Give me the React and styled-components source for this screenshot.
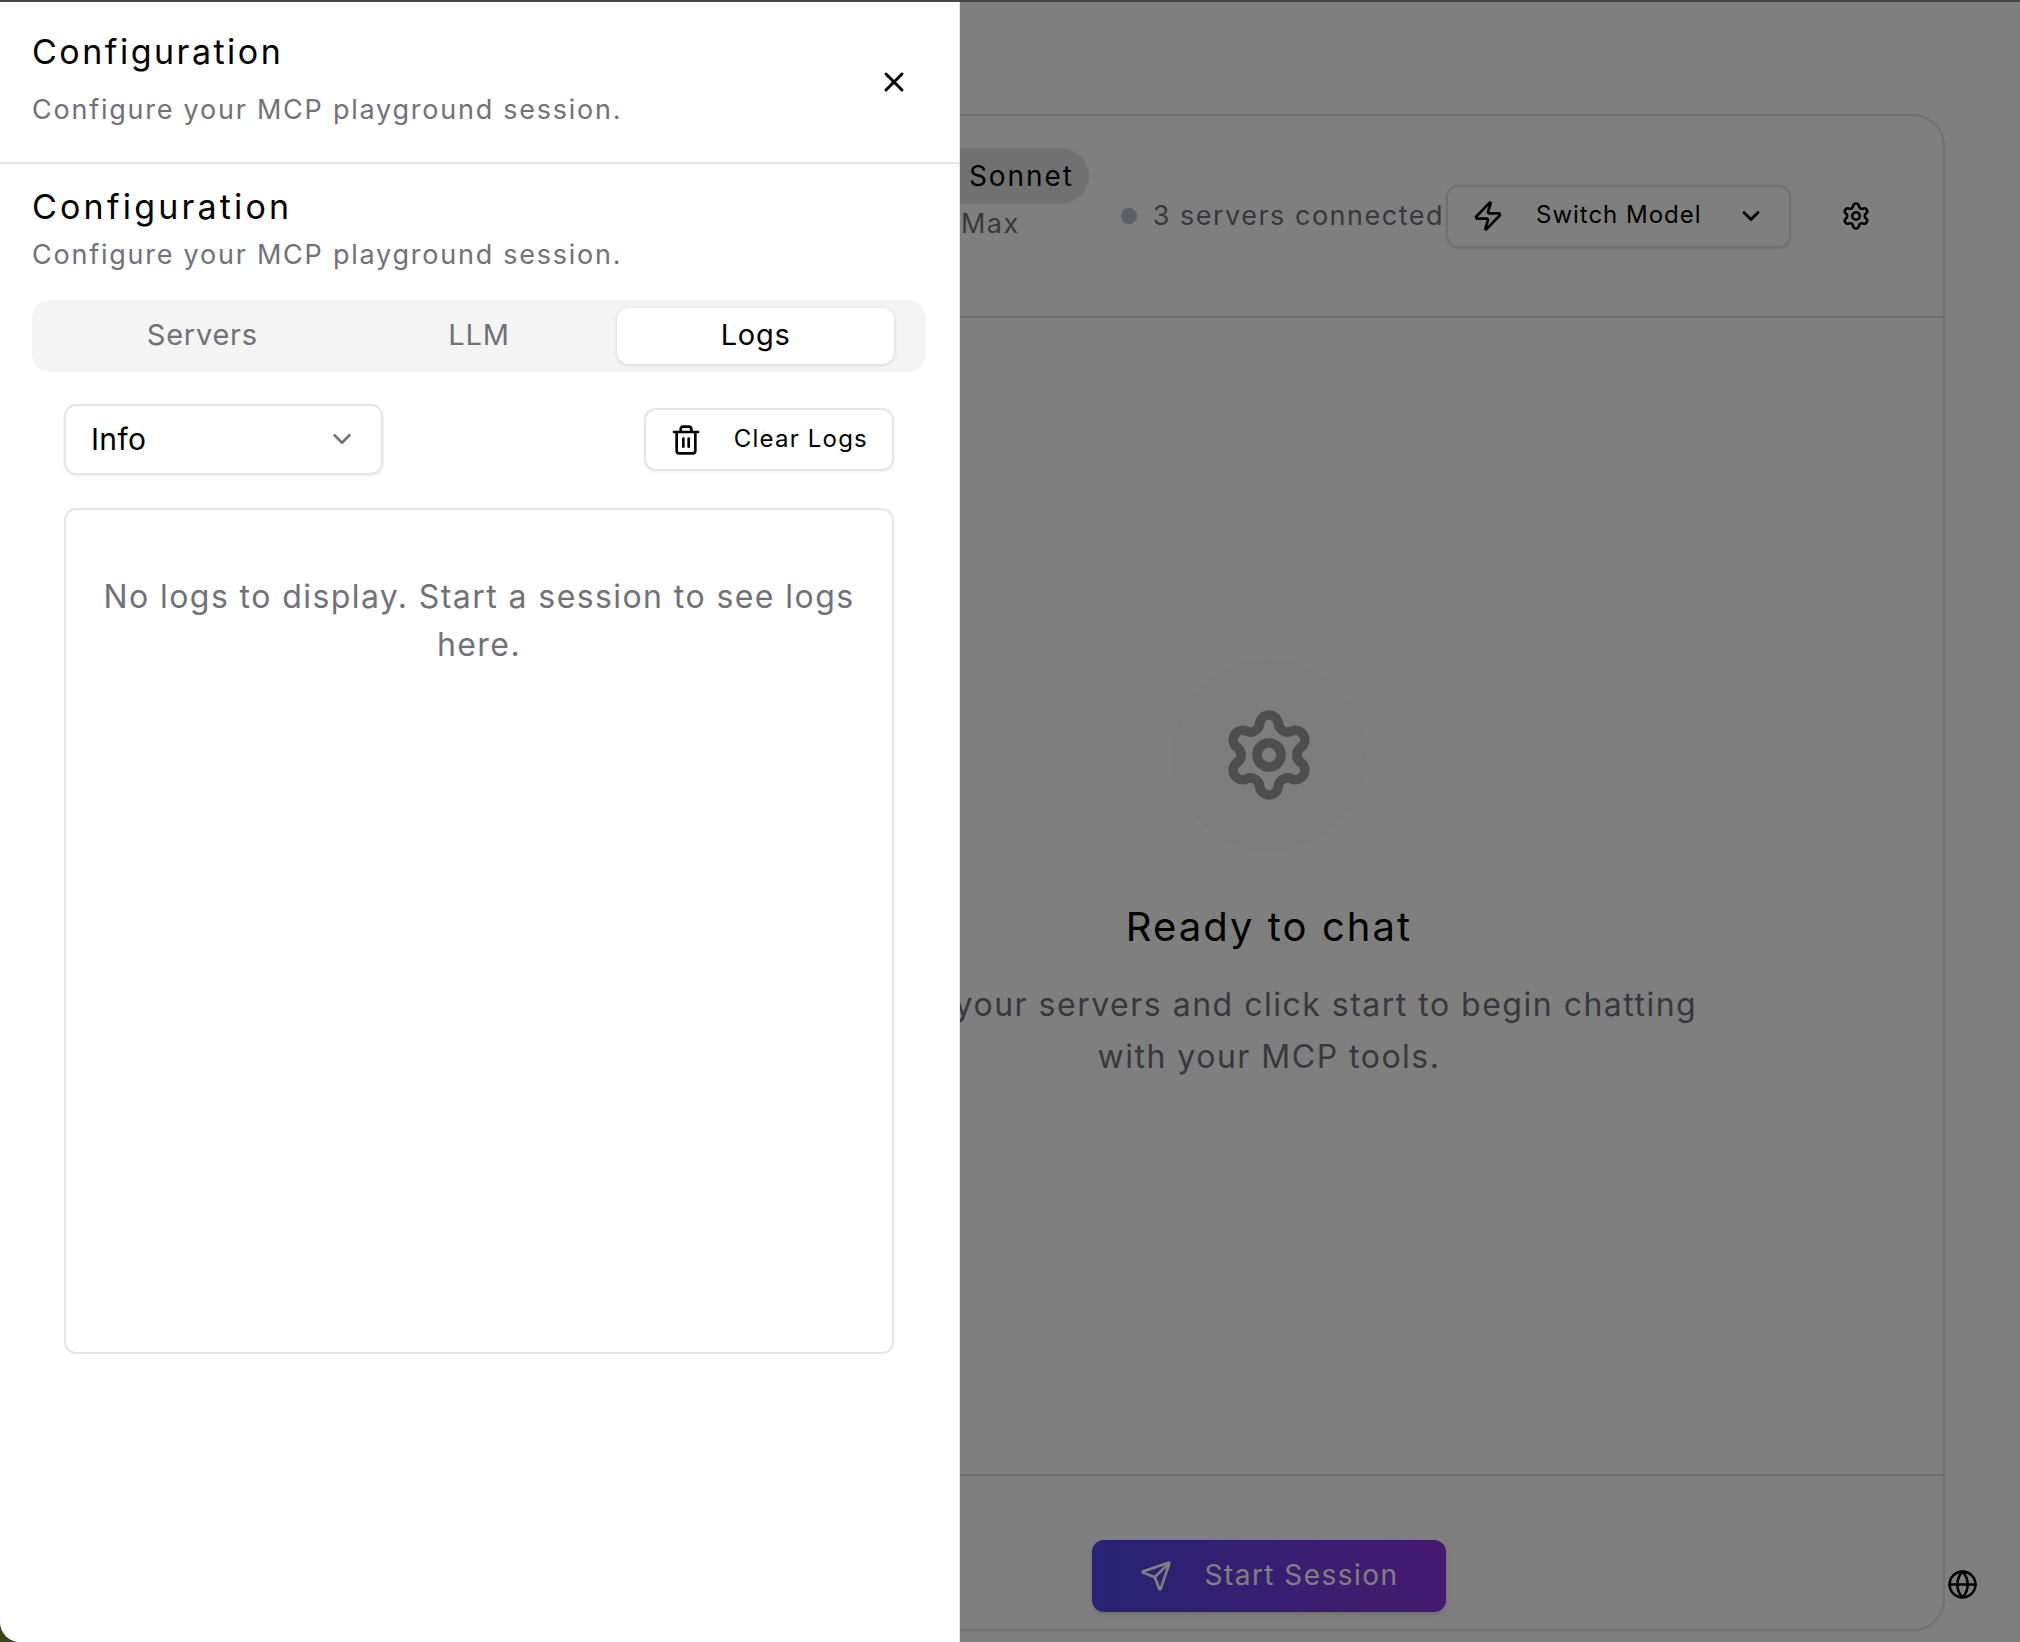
import React from 'react';
import styled, { createGlobalStyle } from 'styled-components';
import { ChevronDown, Globe, Send, Settings, Trash2, X, Zap } from 'lucide-react';

const GlobalStyle = createGlobalStyle`
  html, body, #root {
    margin: 0;
    height: 100%;
  }
  body {
    overflow: hidden;
    font-family: "Inter", "Open Sans", sans-serif;
    background: #fff;
    color: #000;
  }
  * { box-sizing: border-box; }
`;

const Screen = styled.div`
  position: relative;
  height: 1642px;
  width: 2020px;
  overflow: hidden;
  background: #fff;
`;

const Page = styled.main`
  height: 100%;
  padding: 114px 75px 11px 593px;
`;

const ChatCard = styled.section`
  height: 100%;
  display: flex;
  flex-direction: column;
  border: 2px solid #e4e4e4;
  border-radius: 32px;
`;

const CardHeader = styled.header`
  height: 202px;
  flex: none;
  display: flex;
  justify-content: flex-end;
  align-items: center;
  padding-right: 55px;
  border-bottom: 2px solid #e0e0e0;
`;

const ModelInfo = styled.div`
  align-self: flex-start;
  margin: 32px 32px 0 0;
  display: flex;
  flex-direction: column;
`;

const ModelPill = styled.div`
  height: 56px;
  padding: 0 15px 0 200px;
  display: flex;
  align-items: center;
  border-radius: 28px;
  background: #e2e2e2;
  font-size: 28px;
  letter-spacing: 1.9px;
`;

const ModelPlan = styled.div`
  margin-top: 2px;
  padding-left: 192px;
  font-size: 27px;
  line-height: 36px;
  letter-spacing: 1.5px;
  color: #71717a;
`;

const Status = styled.div`
  display: flex;
  align-items: center;
  gap: 16px;
  margin: -1px 2px 0 0;
  font-size: 27px;
  letter-spacing: 1.5px;
  color: #71717a;
`;

const StatusDot = styled.span`
  width: 16px;
  height: 16px;
  border-radius: 50%;
  background: #b4bccb;
`;

const SwitchButton = styled.button`
  width: 345px;
  height: 63px;
  display: flex;
  align-items: center;
  padding: 0 24px 0 24px;
  background: transparent;
  border: 2px solid #e2e2e2;
  border-radius: 12px;
  box-shadow: 0 1px 3px rgba(0, 0, 0, 0.08);
  font: inherit;
  font-size: 24px;
  letter-spacing: 0.98px;
  color: #000;

  span { margin: -4px auto 0 32px; }
`;

const IconButton = styled.button`
  width: 64px;
  height: 64px;
  margin-left: 33px;
  display: flex;
  align-items: center;
  justify-content: center;
  padding: 0;
  background: none;
  border: 0;
  color: #000;
`;

const CardBody = styled.div`
  flex: 1;
  display: flex;
  flex-direction: column;
  align-items: center;
  justify-content: center;
  padding-bottom: 50px;
`;

const IconCircle = styled.div`
  width: 192px;
  height: 192px;
  display: flex;
  align-items: center;
  justify-content: center;
  border-radius: 50%;
  background: #fbfbfb;
  color: #9c9c9c;
`;

const ReadyTitle = styled.h2`
  margin: 50px 0 0;
  font-size: 40px;
  line-height: 52px;
  font-weight: 400;
  letter-spacing: 2.05px;
`;

const ReadyText = styled.p`
  margin: 26px 0 0;
  width: 1100px;
  text-align: center;
  font-size: 32px;
  line-height: 52px;
  letter-spacing: 1.5px;
  color: #71717a;
`;

const CardFooter = styled.footer`
  flex: none;
  display: flex;
  justify-content: center;
  height: 155px;
  padding-top: 64px;
  border-top: 2px solid #e0e0e0;
`;

const StartButton = styled.button`
  width: 354px;
  height: 72px;
  display: flex;
  align-items: center;
  justify-content: center;
  gap: 33px;
  border: 0;
  border-radius: 12px;
  background: linear-gradient(90deg, #4f46e5, #8b35e0);
  box-shadow: 0 2px 4px rgba(0, 0, 0, 0.15);
  font: inherit;
  font-size: 28px;
  letter-spacing: 1.45px;
  color: #fff;

  span { margin-top: -2px; }
`;

const GlobeButton = styled.div`
  position: absolute;
  left: 1947px;
  top: 1569px;
  color: #000;
  display: flex;
`;

const Backdrop = styled.div`
  position: absolute;
  inset: 0;
  background: rgba(0, 0, 0, 0.5);
`;

const TopEdge = styled.div`
  position: absolute;
  inset: 0 0 auto 0;
  height: 2px;
  background: #474747;
`;

const WindowCorner = styled.div`
  position: absolute;
  left: 0;
  bottom: 0;
  width: 18px;
  height: 18px;
  background: #3c4219;
`;

const Sheet = styled.aside`
  position: absolute;
  left: 0;
  top: 2px;
  bottom: 0;
  width: 959px;
  background: #fff;
  border-bottom-left-radius: 20px;
  box-shadow: 1px 0 0 #e6e6e6;
`;

const SheetHeader = styled.header`
  height: 162px;
  display: flex;
  align-items: center;
  justify-content: space-between;
  padding: 0 49px 0 32px;
  border-bottom: 2px solid #e6e6e6;
`;

const HeaderText = styled.div`
  margin-top: -3px;
`;

const SheetTitle = styled.h2`
  margin: 0;
  font-size: 34px;
  line-height: 48px;
  font-weight: 400;
  letter-spacing: ${(p) => (p.$large ? '3.2px' : '2.5px')};
`;

const SheetSubtitle = styled.p`
  margin: ${(p) => (p.$tight ? '0' : '10px')} 0 0;
  font-size: 27px;
  line-height: 48px;
  letter-spacing: 1.76px;
  color: #71717a;
`;

const CloseButton = styled.button`
  display: flex;
  padding: 0;
  border: 0;
  background: none;
  color: #000;
`;

const SheetBody = styled.div`
  padding: 19px 33px 0 32px;
`;

const Tabs = styled.div`
  display: grid;
  grid-template-columns: repeat(3, 1fr);
  height: 72px;
  margin-top: 21px;
  padding: 8px 32px;
  border-radius: 18px;
  background: #f4f4f5;
`;

const Tab = styled.div`
  display: flex;
  align-items: center;
  justify-content: center;
  padding-bottom: 4px;
  border-radius: 12px;
  font-size: 29px;
  letter-spacing: 0.75px;
  color: ${(p) => (p.$active ? '#000' : '#71717a')};
  background: ${(p) => (p.$active ? '#fff' : 'transparent')};
  box-shadow: ${(p) => (p.$active ? '0 1px 4px rgba(0, 0, 0, 0.14)' : 'none')};
`;

const LogsPanel = styled.div`
  padding: 32px 32px 0 32px;
`;

const LogsToolbar = styled.div`
  height: 71px;
  display: flex;
  align-items: center;
  justify-content: space-between;
`;

const LevelSelect = styled.div`
  width: 319px;
  height: 71px;
  display: flex;
  align-items: center;
  justify-content: space-between;
  padding: 0 24px 2px 25px;
  border: 2px solid #e6e6e6;
  border-radius: 12px;
  box-shadow: 0 1px 3px rgba(0, 0, 0, 0.08);
  font-size: 30px;
  letter-spacing: 0.3px;

  svg { color: #71717a; }
`;

const ClearButton = styled.button`
  width: 250px;
  height: 63px;
  display: flex;
  align-items: center;
  padding: 0 24px;
  background: #fff;
  border: 2px solid #e6e6e6;
  border-radius: 12px;
  box-shadow: 0 1px 3px rgba(0, 0, 0, 0.08);
  font: inherit;
  font-size: 24px;
  letter-spacing: 1.2px;
  color: #000;

  span { margin: -2px 0 0 auto; }
`;

const LogBox = styled.div`
  height: 846px;
  margin-top: 33px;
  padding: 63px 32px 0;
  border: 2px solid #e6e6e6;
  border-radius: 12px;
  text-align: center;
  font-size: 32px;
  line-height: 48px;
  letter-spacing: 1.42px;
  color: #71717a;
`;

export default function App() {
  return (
    <Screen>
      <GlobalStyle />
      <Page>
        <ChatCard>
          <CardHeader>
            <ModelInfo>
              <ModelPill>Sonnet</ModelPill>
              <ModelPlan>Max</ModelPlan>
            </ModelInfo>
            <Status>
              <StatusDot />
              3 servers connected
            </Status>
            <SwitchButton>
              <Zap size={32} strokeWidth={2} />
              <span>Switch Model</span>
              <ChevronDown size={28} strokeWidth={2.4} />
            </SwitchButton>
            <IconButton>
              <Settings size={30} strokeWidth={2} />
            </IconButton>
          </CardHeader>
          <CardBody>
            <IconCircle>
              <Settings size={96} strokeWidth={2.4} />
            </IconCircle>
            <ReadyTitle>Ready to chat</ReadyTitle>
            <ReadyText>
              Select your servers and click start to begin chatting
              <br />
              with your MCP tools.
            </ReadyText>
          </CardBody>
          <CardFooter>
            <StartButton>
              <Send size={32} strokeWidth={2} />
              <span>Start Session</span>
            </StartButton>
          </CardFooter>
        </ChatCard>
        <GlobeButton>
          <Globe size={31} strokeWidth={2} />
        </GlobeButton>
      </Page>
      <Backdrop />
      <TopEdge />
      <WindowCorner />
      <Sheet>
        <SheetHeader>
          <HeaderText>
            <SheetTitle>Configuration</SheetTitle>
            <SheetSubtitle>Configure your MCP playground session.</SheetSubtitle>
          </HeaderText>
          <CloseButton>
            <X size={32} strokeWidth={2.2} />
          </CloseButton>
        </SheetHeader>
        <SheetBody>
          <SheetTitle $large>Configuration</SheetTitle>
          <SheetSubtitle $tight>Configure your MCP playground session.</SheetSubtitle>
          <Tabs>
            <Tab>Servers</Tab>
            <Tab>LLM</Tab>
            <Tab $active>Logs</Tab>
          </Tabs>
          <LogsPanel>
            <LogsToolbar>
              <LevelSelect>
                Info
                <ChevronDown size={30} strokeWidth={2} />
              </LevelSelect>
              <ClearButton>
                <Trash2 size={32} strokeWidth={2} />
                <span>Clear Logs</span>
              </ClearButton>
            </LogsToolbar>
            <LogBox>No logs to display. Start a session to see logs here.</LogBox>
          </LogsPanel>
        </SheetBody>
      </Sheet>
    </Screen>
  );
}
